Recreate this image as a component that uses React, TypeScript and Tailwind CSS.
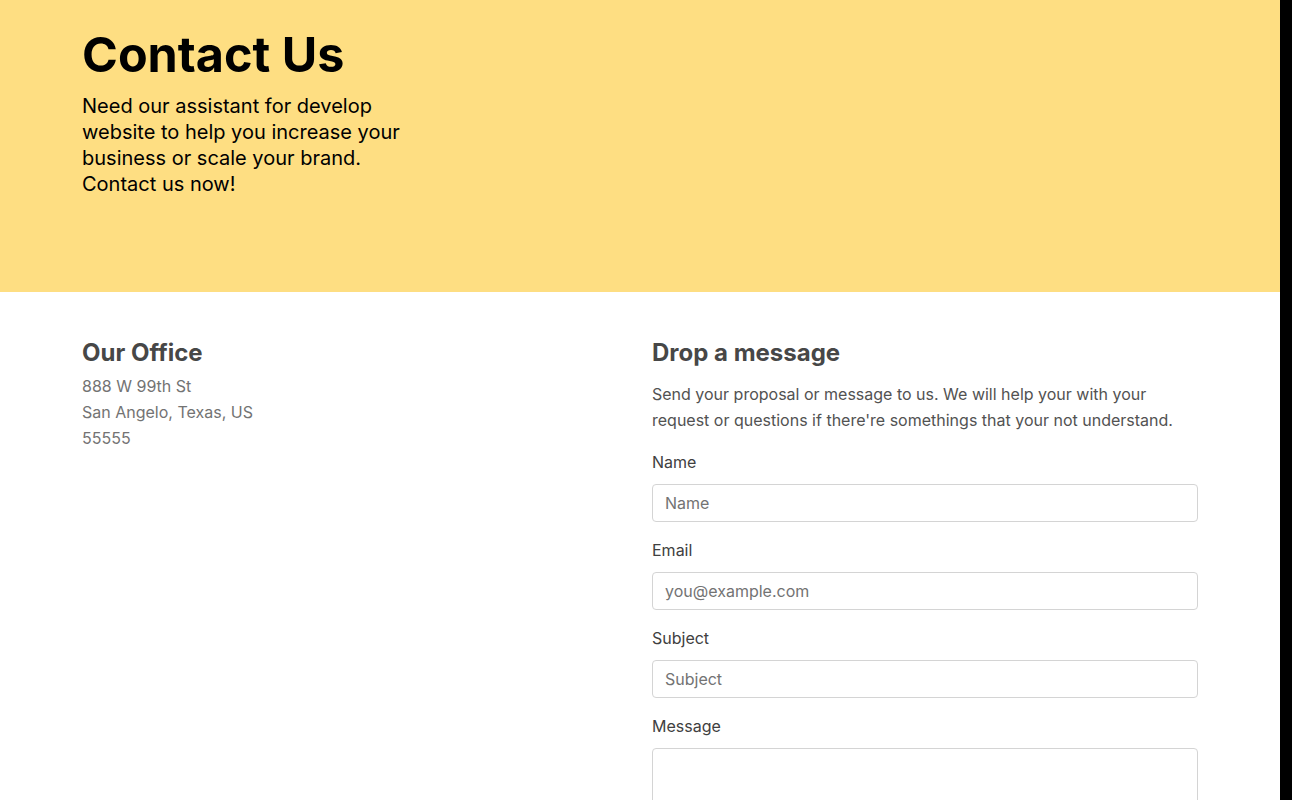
import React from 'react';

const fields = [
  { id: 'name', label: 'Name', placeholder: 'Name' },
  { id: 'email', label: 'Email', placeholder: 'you@example.com' },
  { id: 'subject', label: 'Subject', placeholder: 'Subject' },
];

export default function App() {
  return (
    <div className="flex min-h-screen bg-black font-['Inter',sans-serif]">
      <main className="w-[1280px] shrink-0 bg-white">
        {/* hero */}
        <header className="h-[292px] bg-[#fede82] px-[82px] pt-[31px]">
          <h1 className="text-[48.5px] leading-none font-bold text-black">Contact Us</h1>
          <p className="mt-[13px] w-80 text-xl leading-[26px] text-black">
            Need our assistant for develop website to help you increase your business or scale your brand. Contact us now!
          </p>
        </header>

        <section className="grid grid-cols-2 gap-6 px-[82px] pt-[45px] pb-16">
          <div>
            <h2 className="text-2xl font-bold text-[#474747]">Our Office</h2>
            <address className="mt-1 not-italic text-base leading-[26px] text-neutral-500">
              888 W 99th St
              <br />
              San Angelo, Texas, US
              <br />
              55555
            </address>
          </div>

          <div>
            <h2 className="text-2xl font-bold text-[#474747]">Drop a message</h2>
            <p className="mt-3 text-base leading-[26px] text-neutral-600">
              Send your proposal or message to us. We will help your with your request or questions if there're somethings that your not understand.
            </p>

            <form className="mt-[16px] flex flex-col gap-[15px]">
              {fields.map((f) => (
                <div key={f.id}>
                  <label htmlFor={f.id} className="block text-base leading-[26px] text-neutral-700">
                    {f.label}
                  </label>
                  <input
                    id={f.id}
                    placeholder={f.placeholder}
                    className="mt-[9px] block h-[38px] w-full rounded border border-neutral-300 px-3 text-base text-neutral-700 placeholder:text-neutral-500 outline-none"
                  />
                </div>
              ))}
              <div>
                <label htmlFor="message" className="block text-base leading-[26px] text-neutral-700">
                  Message
                </label>
                <textarea
                  id="message"
                  rows={5}
                  className="mt-[9px] block w-full resize-none rounded border border-neutral-300 px-3 py-2 text-base outline-none"
                />
              </div>
            </form>
          </div>
        </section>
      </main>
    </div>
  );
}
